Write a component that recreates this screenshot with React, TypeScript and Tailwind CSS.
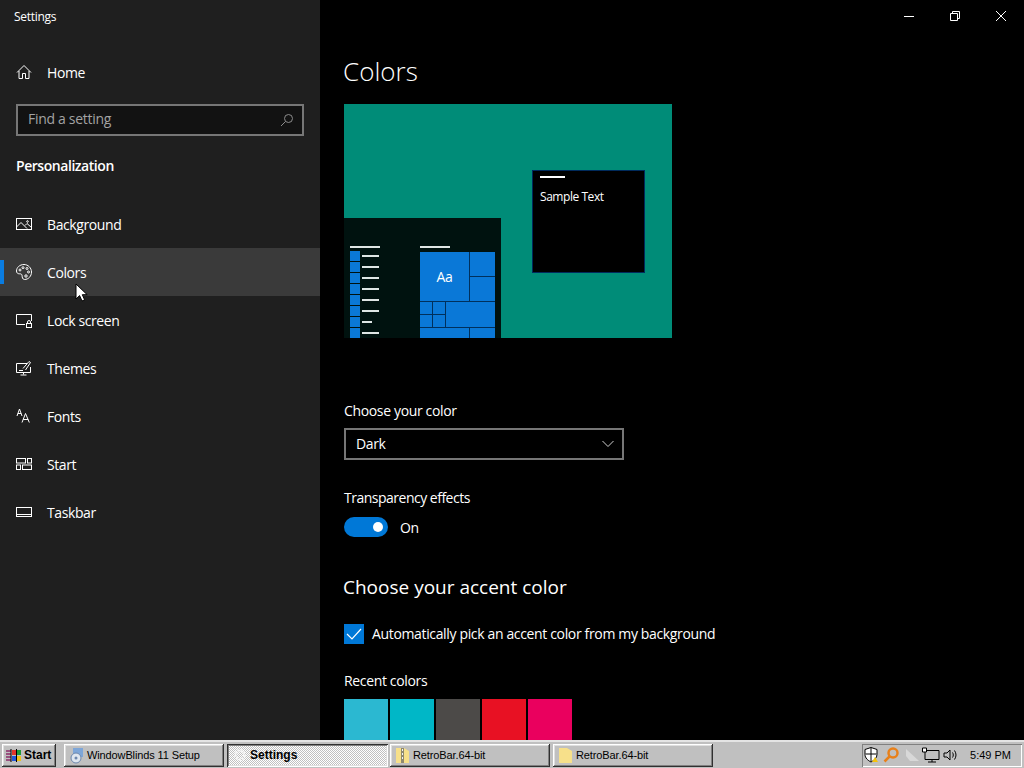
import React from "react";

const ic = { fill: "none", stroke: "#fff", strokeWidth: 1 } as const;

function Icon({ children }: { children: React.ReactNode }) {
  return (
    <svg width="16" height="16" viewBox="0 0 16 16" className="shrink-0" {...ic}>
      {children}
    </svg>
  );
}

const icons: Record<string, React.ReactNode> = {
  home: (
    <Icon>
      <path d="M1 8.500 8 1.500l7 7M3 7v7.500h3.500V9.500h3v5H13V7" />
    </Icon>
  ),
  background: (
    <Icon>
      <rect x="0.5" y="2.5" width="15" height="11" />
      <path d="M0.5 11 5 6.500l6 6M9 9.500l2-2 4.500 4" />
      <circle cx="11.5" cy="5.5" r="0.8" />
    </Icon>
  ),
  colors: (
    <Icon>
      <path d="M8 .5C3.500.5.500 3.700.500 7c0 2 1.300 2.800 3 2.800 1.500 0 2.600.4 2.600 2 0 1 .3 3.700 2.400 3.700 4 0 7-3.400 7-7.500S12 .5 8 .5Z" />
      <circle cx="4" cy="6" r="1" />
      <circle cx="7" cy="3.7" r="1" />
      <circle cx="11" cy="4.5" r="1" />
      <circle cx="12.5" cy="8" r="1" />
      <circle cx="10" cy="12" r="1.2" />
    </Icon>
  ),
  lock: (
    <Icon>
      <path d="M9 12.500H.5v-10h15V9" />
      <rect x="10.5" y="11.5" width="5" height="4" />
      <path d="M11.500 11.500V10a1.500 1.500 0 0 1 3 0v1.500" />
    </Icon>
  ),
  themes: (
    <Icon>
      <path d="M11 3.500H.5v9h14V7M7.500 12.500v2M4.500 15h6" />
      <path d="m7 8.500 6-7 1.500 1-5 7.500M3 10.500h4" />
    </Icon>
  ),
  fonts: (
    <Icon>
      <path d="m1 8 2.500-7L6 8M1.800 5.500h3.400" />
      <path d="m6 14.500 3.500-9 3.800 9M7.200 11.500h5" />
    </Icon>
  ),
  start: (
    <Icon>
      <rect x="0.5" y="2.5" width="9" height="4.5" />
      <rect x="11.5" y="2.5" width="4" height="4.5" />
      <rect x="0.5" y="9" width="4" height="4.5" />
      <rect x="6.5" y="9" width="9" height="4.5" />
    </Icon>
  ),
  taskbar: (
    <Icon>
      <rect x="0.5" y="3.5" width="15" height="9" />
      <path d="M0.5 10.500h15" />
    </Icon>
  ),
};

const navItems = [
  ["background", "Background"],
  ["colors", "Colors"],
  ["lock", "Lock screen"],
  ["themes", "Themes"],
  ["fonts", "Fonts"],
  ["start", "Start"],
  ["taskbar", "Taskbar"],
];

function NavRow({ icon, label, active }: { icon: string; label: string; active?: boolean }) {
  return (
    <div className={`relative flex h-12 items-center gap-[15px] pl-4 text-[14px] tracking-[-0.4px] text-white ${active ? "bg-[#3a3a3a]" : ""}`}>
      {active && <div className="absolute left-0 top-3 h-6 w-1 bg-[#0a7ce0]" />}
      {icons[icon]}
      <span>{label}</span>
    </div>
  );
}

function Sidebar() {
  return (
    <aside className="relative flex w-80 shrink-0 flex-col bg-[#1f1f1f]">
      <div className="flex h-[34px] items-center pl-[14px] text-[12px] tracking-[-0.3px] text-white">Settings</div>
      <div className="mt-[14px]">
        <NavRow icon="home" label="Home" />
      </div>
      <div className="mx-4 mt-2 flex h-8 items-center justify-between border-2 border-[#767676] bg-[#121212] pl-[10px] pr-2 text-[14px] tracking-[-0.3px] text-[#a3a3a3]">
        <span className="-translate-y-[2px]">Find a setting</span>
        <svg width="14" height="14" viewBox="0 0 14 14" fill="none" stroke="#8c8c8c">
          <circle cx="8.5" cy="5.5" r="4" />
          <path d="M5.500 8.500 1 13" />
        </svg>
      </div>
      <div className="mt-[20px] pl-4 text-[14px] font-semibold leading-5 tracking-[-0.45px] text-white">Personalization</div>
      <div className="mt-6">
        {navItems.map(([i, l]) => (
          <NavRow key={l} icon={i} label={l} active={l === "Colors"} />
        ))}
      </div>
      <svg className="absolute left-[75px] top-[283px]" width="13" height="19" viewBox="0 0 13 19">
        <path d="M1 1v15l3.600-3.400L7 18l2.600-1.200-2.300-5.100h4.900L1 1Z" fill="#fff" stroke="#000" />
      </svg>
    </aside>
  );
}

function Preview() {
  const lines = [18, 18, 18, 18, 18, 18, 10, 18];
  return (
    <div className="relative h-[234px] w-[328px] bg-[#008c78]">
      <div className="absolute left-[188px] top-[66px] h-[103px] w-[113px] border border-[#002a5c] bg-black pl-[7px] pt-[5px]">
        <div className="h-0.5 w-[25px] bg-white" />
        <div className="mt-[11px] text-[12px] leading-4 tracking-[-0.45px] text-white">Sample Text</div>
      </div>
      <div className="absolute bottom-0 left-0 flex h-[120px] w-[157px] items-end bg-[#00120f] pl-1.5">
        <div className="flex w-[70px] flex-col">
          <div className="h-0.5 w-[30px] bg-[#dfe5e4]" />
          <div className="mt-[3px] flex flex-col gap-px">
            {lines.map((w, i) => (
              <div key={i} className="flex h-[10px] items-center gap-[2px]">
                <div className="h-[10px] w-[10px] bg-[#0a78d7]" />
                {w === 18 ? <div className="h-0.5 w-[17px] bg-[#dfe5e4]" /> : <div className="h-0.5 w-[10px] bg-[#dfe5e4]" />}
              </div>
            ))}
          </div>
        </div>
        <div className="flex w-[75px] flex-col">
          <div className="h-0.5 w-[30px] bg-[#dfe5e4]" />
          <div className="mt-[4px] grid h-[86px] grid-cols-[12px_12px_23px_25px] grid-rows-[24px_24px_12px_12px_10px] gap-px bg-[#00305c]">
            <div className="col-span-3 row-span-2 flex items-center justify-center bg-[#0a78d7] text-[14px] text-white">Aa</div>
            <div className="bg-[#0a78d7]" />
            <div className="bg-[#0a78d7]" />
            <div className="bg-[#0a78d7]" />
            <div className="bg-[#0a78d7]" />
            <div className="col-span-2 row-span-2 bg-[#0a78d7]" />
            <div className="bg-[#0a78d7]" />
            <div className="bg-[#0a78d7]" />
            <div className="col-span-3 bg-[#0a78d7]" />
            <div className="bg-[#0a78d7]" />
          </div>
        </div>
      </div>
    </div>
  );
}

function Main() {
  return (
    <main className="flex min-w-0 flex-1 flex-col bg-black text-white">
      <div className="flex h-8 justify-end">
        <div className="flex w-[46px] items-center justify-center">
          <svg width="10" height="10" viewBox="0 0 10 10" stroke="#fff"><path d="M0 5.500h10" /></svg>
        </div>
        <div className="flex w-[46px] items-center justify-center">
          <svg width="10" height="10" viewBox="0 0 10 10" fill="none" stroke="#fff"><path d="M.5 2.500h7v7h-7zM2.500 2.500v-2h7v7h-2" /></svg>
        </div>
        <div className="flex w-[46px] items-center justify-center">
          <svg width="10" height="10" viewBox="0 0 10 10" stroke="#fff"><path d="m0 0 10 10M10 0 0 10" /></svg>
        </div>
      </div>
      <div className="overflow-hidden pl-6 tracking-[-0.35px]">
        <h1 className="-ml-px mt-[19px] h-10 text-[26px] font-light leading-10 tracking-normal">Colors</h1>
        <div className="mt-[13px]">
          <Preview />
        </div>
        <div className="mt-[63px] text-[14px] leading-5">Choose your color</div>
        <div className="mt-[7px] flex h-8 w-[280px] items-center justify-between border-2 border-[#767676] pl-[10px] pr-[8px] text-[14px]">
          <span className="-translate-y-px">Dark</span>
          <svg width="12" height="8" viewBox="0 0 12 8" fill="none" stroke="#cfcfcf"><path d="m.5 1 5.500 5.500L11.500 1" /></svg>
        </div>
        <div className="mt-[28px] text-[14px] leading-5 tracking-[-0.5px]">Transparency effects</div>
        <div className="mt-[9px] flex h-5 items-center gap-3 text-[14px]">
          <div className="flex h-5 w-11 items-center justify-end rounded-full bg-[#0078d7] pr-[5px]">
            <div className="h-[10px] w-[10px] rounded-full bg-white" />
          </div>
          <span>On</span>
        </div>
        <h2 className="-ml-px mt-9 h-7 text-[19px] leading-7 tracking-normal">Choose your accent color</h2>
        <div className="mt-[23px] flex h-5 items-center gap-2 text-[14px]">
          <div className="flex h-5 w-5 items-center justify-center bg-[#0078d7]">
            <svg width="16" height="14" viewBox="0 0 16 14" fill="none" stroke="#fff" strokeWidth="1.2"><path d="m1 7 5 5L15 2" /></svg>
          </div>
          <span className="-translate-y-px">Automatically pick an accent color from my background</span>
        </div>
        <div className="mt-[27px] text-[14px] leading-5">Recent colors</div>
        <div className="mt-2 flex h-[41px] gap-0.5">
          {["bg-[#2bb8d1]", "bg-[#00b7c7]", "bg-[#4c4a48]", "bg-[#e81123]", "bg-[#ea005e]"].map((c) => (
            <div key={c} className={`w-11 ${c}`} />
          ))}
        </div>
      </div>
    </main>
  );
}

const raised =
  "shadow-[inset_-1px_-1px_0_#303030,inset_1px_1px_0_#fff,inset_-2px_-2px_0_#808080,inset_2px_2px_0_#dfdfdf]";

function Folder({ zip }: { zip?: boolean }) {
  return (
    <svg width="14" height="17" viewBox="0 0 14 17" className="shrink-0">
      <path d="M0 1h8l5 3v12H0Z" fill="#f7e08a" />
      {zip && <path d="M5 1h3v15H5z" fill="#8f8a70" />}
      {zip && <path d="M6 2h1v2H6zm0 4h1v2H6zm0 4h1v2H6z" fill="#f4f4f4" />}
    </svg>
  );
}

function TaskButton({ icon, label, width }: { icon: React.ReactNode; label: string; width: string }) {
  return (
    <div className={`flex h-[23px] items-center gap-[3px] pl-[6px] text-[11px] tracking-[-0.12px] text-black ${width} ${raised} bg-[#c0c0c0]`}>
      {icon}
      <span>{label}</span>
    </div>
  );
}

function Taskbar() {
  return (
    <footer className="flex h-7 items-center border-t-2 border-[#e4e4e4] bg-[#c0c0c0] pl-0.5 pr-0.5 font-['Liberation_Sans',sans-serif]">
      <div className={`flex h-[23px] w-[54px] items-center gap-[2px] pl-[4px] text-[12px] font-bold text-black ${raised}`}>
        <svg width="16" height="15" viewBox="0 0 16 15" className="shrink-0">
          <path d="M6 2h4v5H6z" fill="#e0352b" />
          <path d="M11 2h4v5h-4z" fill="#1d9b3a" />
          <path d="M6 8h4v5H6z" fill="#2458d8" />
          <path d="M11 8h4v5h-4z" fill="#eec21c" />
          <path d="M0 3h5M0 6h5M0 9h5M0 12h5" stroke="#8a2b6a" strokeWidth="1.500" />
          <path d="M5 1v13M10.500 1v13" stroke="#000" />
        </svg>
        <span>Start</span>
      </div>
      <div className="ml-2">
        <TaskButton
          width="w-40"
          label="WindowBlinds 11 Setup"
          icon={
            <svg width="14" height="17" viewBox="0 0 14 17" className="shrink-0">
              <path d="M3 1h10v9H3z" fill="#7ea6d8" />
              <circle cx="6" cy="11" r="5" fill="#dfe6ef" stroke="#6d87ad" />
              <circle cx="6" cy="11" r="1.500" fill="#6d87ad" />
            </svg>
          }
        />
      </div>
      <div className="ml-[3px] flex h-[23px] w-[161px] items-center gap-[3px] bg-[repeating-conic-gradient(#c0c0c0_0_25%,#fff_0_50%)] bg-[length:2px_2px] pl-[6px] text-[12px] font-bold text-black shadow-[inset_1px_1px_0_#303030,inset_-1px_-1px_0_#fff,inset_2px_2px_0_#808080,inset_-2px_-2px_0_#dfdfdf]">
        <svg width="14" height="14" viewBox="0 0 14 14" className="shrink-0">
          <circle cx="7" cy="7" r="4.500" fill="none" stroke="#f4f4f4" strokeWidth="3" strokeDasharray="2 1" />
        </svg>
        <span>Settings</span>
      </div>
      <div className="ml-0.5">
        <TaskButton width="w-40" label="RetroBar.64-bit" icon={<Folder zip />} />
      </div>
      <div className="ml-[3px]">
        <TaskButton width="w-40" label="RetroBar.64-bit" icon={<Folder />} />
      </div>
      <div className="ml-auto flex h-[23px] w-40 items-center pl-[1px] pr-[11px] text-[11px] text-black shadow-[inset_1px_1px_0_#808080,inset_-1px_-1px_0_#fff]">
        <svg width="96" height="18" viewBox="0 0 96 18" className="shrink-0" fill="none">
          <path d="M8 1.500 14 3.500v5c0 3.500-3 6-6 7.500-3-1.500-6-4-6-7.500v-5Z" fill="#fff" stroke="#000" />
          <path d="M8 2v13M2.500 8h11" stroke="#000" />
          <path d="M12 11l3 5H9Z" fill="#f4c20d" />
          <circle cx="30" cy="7" r="4.500" stroke="#e8801a" strokeWidth="2.500" />
          <path d="m26.500 10.500-5 5" stroke="#e8801a" strokeWidth="2.500" />
          <path d="m43 3 13 12h-9L43 10Z" fill="#d8d8d8" />
          <path d="M62 4.500h14v9H62zM65 16h8M69 13.500V16" stroke="#000" />
          <path d="M59.500 2h4v4h-4z" fill="#fff" stroke="#000" />
          <path d="M81 7h3l3-3v10l-3-3h-3Z" stroke="#000" />
          <path d="M89.500 6.500c1 1.500 1 3.500 0 5M91.500 4.500c2 3 2 6 0 9" stroke="#000" />
        </svg>
        <span className="ml-auto">5:49 PM</span>
      </div>
    </footer>
  );
}

export default function App() {
  return (
    <div className="flex h-[768px] w-[1024px] flex-col overflow-hidden font-['Open_Sans',sans-serif]">
      <div className="flex h-[740px] min-h-0">
        <Sidebar />
        <Main />
      </div>
      <Taskbar />
    </div>
  );
}
